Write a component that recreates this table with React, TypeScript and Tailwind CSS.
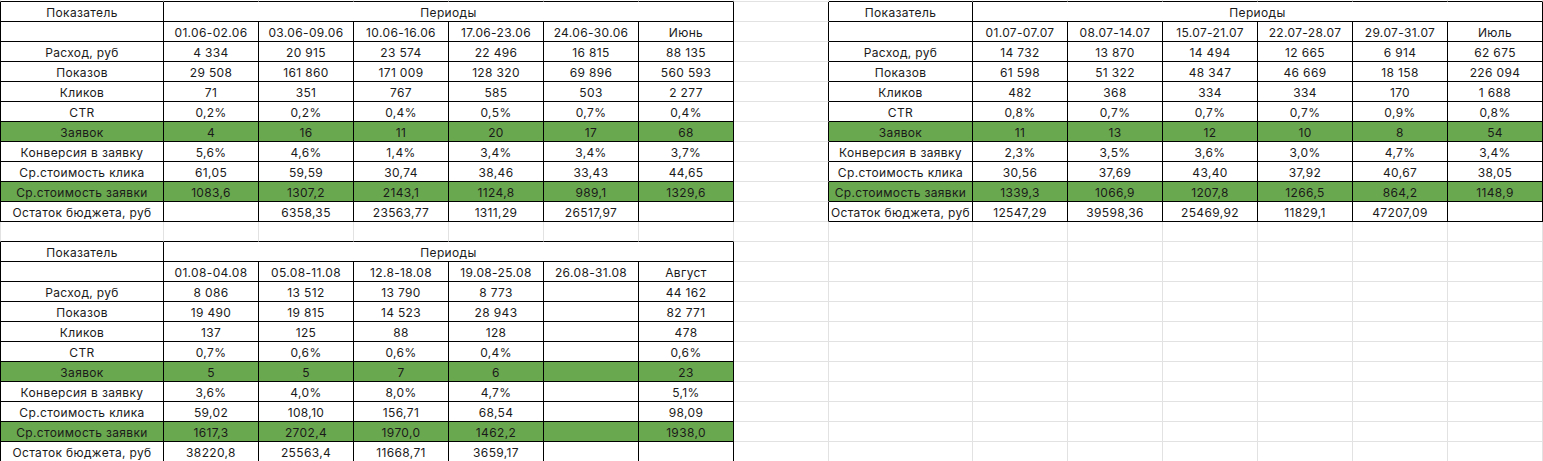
import React from 'react';

// Данные трёх таблиц (июнь, июль, август)
const labels = [
  'Расход, руб',
  'Показов',
  'Кликов',
  'CTR',
  'Заявок',
  'Конверсия в заявку',
  'Ср.стоимость клика',
  'Ср.стоимость заявки',
  'Остаток бюджета, руб',
];

const greenRows = [4, 7]; // индексы в labels

interface Block {
  dates: string[];
  values: string[][];
}

const june: Block = {
  dates: ['01.06-02.06', '03.06-09.06', '10.06-16.06', '17.06-23.06', '24.06-30.06', 'Июнь'],
  values: [
    ['4 334', '20 915', '23 574', '22 496', '16 815', '88 135'],
    ['29 508', '161 860', '171 009', '128 320', '69 896', '560 593'],
    ['71', '351', '767', '585', '503', '2 277'],
    ['0,2%', '0,2%', '0,4%', '0,5%', '0,7%', '0,4%'],
    ['4', '16', '11', '20', '17', '68'],
    ['5,6%', '4,6%', '1,4%', '3,4%', '3,4%', '3,7%'],
    ['61,05', '59,59', '30,74', '38,46', '33,43', '44,65'],
    ['1083,6', '1307,2', '2143,1', '1124,8', '989,1', '1329,6'],
    ['', '6358,35', '23563,77', '1311,29', '26517,97', ''],
  ],
};

const july: Block = {
  dates: ['01.07-07.07', '08.07-14.07', '15.07-21.07', '22.07-28.07', '29.07-31.07', 'Июль'],
  values: [
    ['14 732', '13 870', '14 494', '12 665', '6 914', '62 675'],
    ['61 598', '51 322', '48 347', '46 669', '18 158', '226 094'],
    ['482', '368', '334', '334', '170', '1 688'],
    ['0,8%', '0,7%', '0,7%', '0,7%', '0,9%', '0,8%'],
    ['11', '13', '12', '10', '8', '54'],
    ['2,3%', '3,5%', '3,6%', '3,0%', '4,7%', '3,4%'],
    ['30,56', '37,69', '43,40', '37,92', '40,67', '38,05'],
    ['1339,3', '1066,9', '1207,8', '1266,5', '864,2', '1148,9'],
    ['12547,29', '39598,36', '25469,92', '11829,1', '47207,09', ''],
  ],
};

const august: Block = {
  dates: ['01.08-04.08', '05.08-11.08', '12.8-18.08', '19.08-25.08', '26.08-31.08', 'Август'],
  values: [
    ['8 086', '13 512', '13 790', '8 773', '', '44 162'],
    ['19 490', '19 815', '14 523', '28 943', '', '82 771'],
    ['137', '125', '88', '128', '', '478'],
    ['0,7%', '0,6%', '0,6%', '0,4%', '', '0,6%'],
    ['5', '5', '7', '6', '', '23'],
    ['3,6%', '4,0%', '8,0%', '4,7%', '', '5,1%'],
    ['59,02', '108,10', '156,71', '68,54', '', '98,09'],
    ['1617,3', '2702,4', '1970,0', '1462,2', '', '1938,0'],
    ['38220,8', '25563,4', '11668,71', '3659,17', '', ''],
  ],
};

const ROWS = 23;
const COLS = 15;

// где стоят таблицы: [верхняя строка, левая колонка, данные]
const tables: [number, number, Block][] = [
  [0, 0, june],
  [0, 8, july],
  [12, 0, august],
];

interface Cell {
  text: string;
  green: boolean;
  merged: boolean; // ячейка «Периоды»
  skip: boolean; // спрятана под объединённой
}

const inTable = (r: number, c: number) =>
  tables.some(([tr, tc]) => r >= tr && r <= tr + 10 && c >= tc && c <= tc + 6);

const buildSheet = (): Cell[][] => {
  const sheet: Cell[][] = [];
  for (let r = 0; r < ROWS; r++) {
    const row: Cell[] = [];
    for (let c = 0; c < COLS; c++) row.push({ text: '', green: false, merged: false, skip: false });
    sheet.push(row);
  }
  tables.forEach(([tr, tc, block]) => {
    sheet[tr][tc].text = 'Показатель';
    sheet[tr][tc + 1] = { text: 'Периоды', green: false, merged: true, skip: false };
    for (let i = 2; i <= 6; i++) sheet[tr][tc + i].skip = true;
    block.dates.forEach((d, i) => (sheet[tr + 1][tc + 1 + i].text = d));
    labels.forEach((label, li) => {
      const r = tr + 2 + li;
      const green = greenRows.includes(li);
      sheet[r][tc] = { text: label, green, merged: false, skip: false };
      block.values[li].forEach((v, i) => {
        sheet[r][tc + 1 + i] = { text: v, green, merged: false, skip: false };
      });
    });
  });
  return sheet;
};

const SheetCell: React.FC<{ r: number; c: number; cell: Cell }> = ({ r, c, cell }) => {
  const rightCol = cell.merged ? c + 5 : c;
  const rightBlack = inTable(r, rightCol) || inTable(r, rightCol + 1);
  const bottomBlack = inTable(r, c) || inTable(r + 1, c);
  return (
    <div
      className={`flex items-end justify-center overflow-visible whitespace-nowrap border-r border-b pb-[1px] leading-[14px] ${
        cell.merged ? 'col-span-6' : ''
      } ${c === 0 ? 'border-l' : ''} ${c === 0 && inTable(r, 0) ? 'border-l-black' : 'border-l-[#e2e2e2]'} ${
        rightBlack ? 'border-r-black' : 'border-r-[#e2e2e2]'
      } ${bottomBlack ? 'border-b-black' : 'border-b-[#e2e2e2]'} ${cell.green ? 'bg-[#6aa84f]' : 'bg-white'}`}
    >
      {cell.text}
    </div>
  );
};

export default function App() {
  const sheet = buildSheet();

  return (
    <div className="h-[461px] w-[1543px] overflow-hidden bg-white">
      <div
        className="grid grid-cols-[164px_repeat(7,95px)_144px_repeat(6,95px)] grid-rows-[2px_repeat(23,20px)] text-[12px] tracking-[0.35px] text-[#1a1a1a]"
        style={{ fontFamily: 'Inter, "Noto Sans", sans-serif' }}
      >
        {/* полоска от строки над таблицами */}
        {Array.from({ length: COLS }).map((_, c) => (
          <div
            key={`top-${c}`}
            className={`border-r border-b border-r-[#e2e2e2] ${c === 0 ? 'border-l border-l-[#e2e2e2]' : ''} ${
              inTable(0, c) ? 'border-b-black' : 'border-b-[#e2e2e2]'
            }`}
          />
        ))}
        {sheet.map((row, r) =>
          row.map((cell, c) => (cell.skip ? null : <SheetCell key={`${r}-${c}`} r={r} c={c} cell={cell} />))
        )}
      </div>
    </div>
  );
}
